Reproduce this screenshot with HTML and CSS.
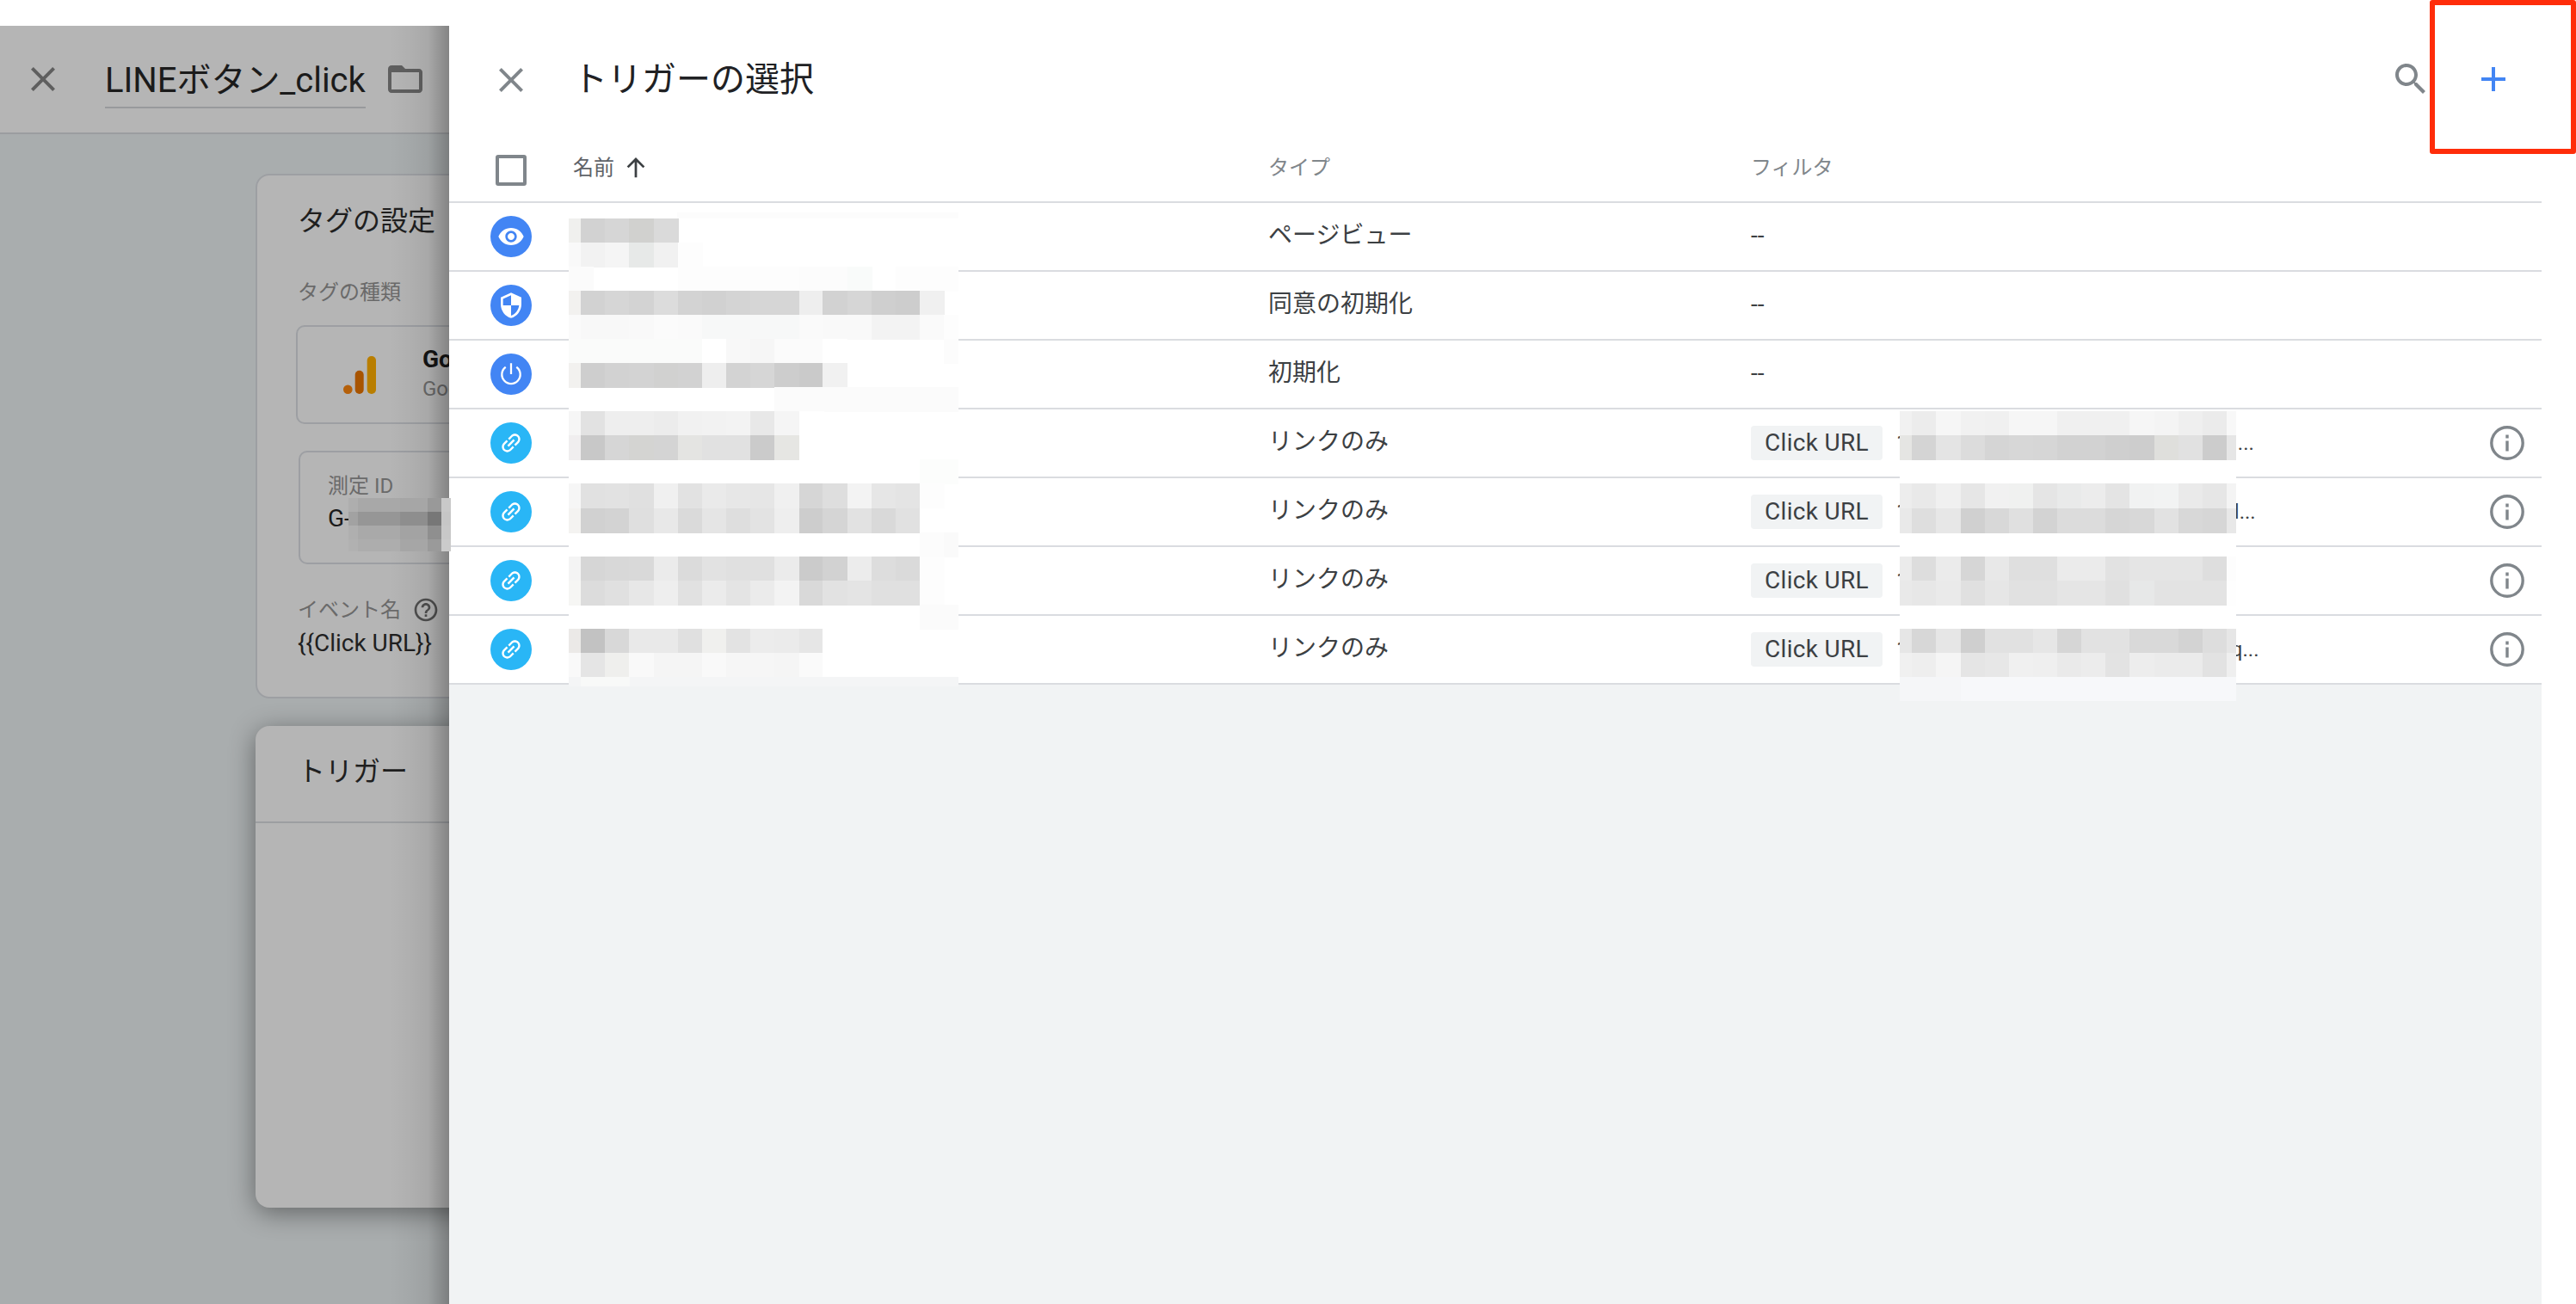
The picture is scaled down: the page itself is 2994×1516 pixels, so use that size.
FILE: index.html
```html
<!DOCTYPE html>
<html lang="ja">
<head>
<meta charset="utf-8">
<title>トリガーの選択</title>
<link rel="stylesheet" href="styles.css">
</head>
<body>
<div class="app">
  <section class="behind">
    <header class="tag-head">
      <svg class="ico48 ico-dark" viewBox="0 0 24 24"><path d="M19 6.41L17.59 5 12 10.59 6.41 5 5 6.41 10.59 12 5 17.59 6.41 19 12 13.41 17.59 19 19 17.59 13.41 12z"/></svg>
      <h1 class="tag-name">LINEボタン_click</h1>
      <svg class="ico48 ico-dark" viewBox="0 0 24 24"><path d="M20 6h-8l-2-2H4c-1.1 0-1.99.9-1.99 2L2 18c0 1.1.9 2 2 2h16c1.1 0 2-.9 2-2V8c0-1.1-.9-2-2-2zm0 12H4V8h16v10z"/></svg>
    </header>
    <div class="tag-body">
      <div class="card card-config">
        <h2 class="card-title">タグの設定</h2>
        <div class="label label-type">タグの種類</div>
        <div class="type-box">
          <svg class="ga" viewBox="0 0 38 44"><circle cx="5.3" cy="38.7" r="5.3" fill="#b5600a"/><rect x="13.7" y="16.7" width="10" height="27.3" rx="5" fill="#a85400"/><rect x="27.7" width="10.3" height="44" rx="5" fill="#b97e00"/></svg>
          <div class="type-text"><div class="type-main">Google アナリティクス</div><div class="type-sub">Google マーケティング</div></div>
        </div>
        <div class="id-box">
          <div class="label">測定 ID</div>
          <div class="id-value">G-</div>
        </div>
        <div class="label label-event">イベント名
          <svg class="help" viewBox="0 0 24 24"><path d="M11 18h2v-2h-2v2zm1-16C6.48 2 2 6.48 2 12s4.48 10 10 10 10-4.48 10-10S17.52 2 12 2zm0 18c-4.41 0-8-3.59-8-8s3.59-8 8-8 8 3.59 8 8-3.59 8-8 8zm0-14c-2.21 0-4 1.79-4 4h2c0-1.1.9-2 2-2s2 .9 2 2c0 2-3 1.75-3 5h2c0-2.25 3-2.5 3-5 0-2.21-1.79-4-4-4z"/></svg>
        </div>
        <div class="event-value">{{Click URL}}</div>
      </div>
      <div class="card card-trigger">
        <h2 class="card-title trigger-title">トリガー</h2>
      </div>
    </div>
  </section>

  <section class="panel">
    <header class="panel-head">
      <svg class="ico48 ico-gray" viewBox="0 0 24 24"><path d="M19 6.41L17.59 5 12 10.59 6.41 5 5 6.41 10.59 12 5 17.59 6.41 19 12 13.41 17.59 19 19 17.59 13.41 12z"/></svg>
      <h1 class="panel-title">トリガーの選択</h1>
      <div class="panel-actions">
        <svg class="ico48 ico-gray" viewBox="0 0 24 24"><path d="M15.5 14h-.79l-.28-.27C15.41 12.59 16 11.11 16 9.5 16 5.91 13.09 3 9.5 3S3 5.91 3 9.5 5.91 16 9.5 16c1.61 0 3.09-.59 4.23-1.57l.27.28v.79l5 4.99L20.49 19l-4.99-5zm-6 0C7.01 14 5 11.99 5 9.5S7.01 5 9.5 5 14 7.01 14 9.5 11.99 14 9.5 14z"/></svg>
        <svg class="ico48 ico-blue" viewBox="0 0 24 24"><path d="M19 13h-6v6h-2v-6H5v-2h6V5h2v6h6v2z"/></svg>
      </div>
    </header>
    <div class="list">
      <div class="row row-head">
        <div class="cell-center"><span class="checkbox"></span></div>
        <div class="th th-name">名前
          <svg class="sort" viewBox="0 0 24 24"><path d="M12 21V4M4.5 11.5L12 4l7.500 7.500"/></svg>
        </div>
        <div class="th">タイプ</div>
        <div class="th">フィルタ</div>
        <div></div>
      </div>

      <div class="row">
        <div class="cell-center"><span class="badge badge-blue"><svg class="white32" viewBox="0 0 24 24"><path d="M12 4.500C7 4.500 2.730 7.610 1 12c1.730 4.390 6 7.500 11 7.500s9.270-3.110 11-7.500c-1.730-4.390-6-7.500-11-7.500zM12 17c-2.760 0-5-2.240-5-5s2.240-5 5-5 5 2.240 5 5-2.240 5-5 5zm0-8c-1.660 0-3 1.340-3 3s1.340 3 3 3 3-1.340 3-3-1.340-3-3-3z"/></svg></span></div>
        <div></div><div class="td">ページビュー</div><div class="td">--</div><div></div>
      </div>
      <div class="row">
        <div class="cell-center"><span class="badge badge-blue"><svg class="white32" viewBox="0 0 24 24"><path d="M12 1L3 5v6c0 5.550 3.840 10.740 9 12 5.160-1.260 9-6.450 9-12V5l-9-4zm0 10.990h7c-.53 4.120-3.280 7.790-7 8.940V12H5V6.300l7-3.110v8.800z"/></svg></span></div>
        <div></div><div class="td">同意の初期化</div><div class="td">--</div><div></div>
      </div>
      <div class="row">
        <div class="cell-center"><span class="badge badge-blue"><svg class="power" viewBox="0 0 24 24"><path d="M12 2.500v9.500M7.300 5.800a8 8 0 1 0 9.400 0"/></svg></span></div>
        <div></div><div class="td">初期化</div><div class="td">--</div><div></div>
      </div>
      <div class="row">
        <div class="cell-center"><span class="badge badge-sky"><svg class="white32 link" viewBox="0 0 24 24"><path d="M3.900 12c0-1.710 1.390-3.100 3.100-3.100h4V7H7c-2.760 0-5 2.240-5 5s2.240 5 5 5h4v-1.900H7c-1.710 0-3.100-1.390-3.100-3.100zM8 13h8v-2H8v2zm9-6h-4v1.900h4c1.710 0 3.100 1.390 3.100 3.100s-1.390 3.100-3.100 3.100h-4V17h4c2.760 0 5-2.240 5-5s-2.240-5-5-5z"/></svg></span></div>
        <div></div><div class="td">リンクのみ</div>
        <div class="filter"><span class="chip">Click URL</span><span class="val">1</span><span class="tail tail-a">...</span></div>
        <div class="cell-center"><svg class="info" viewBox="0 0 40 40"><circle cx="20" cy="20" r="18.200"/><path d="M20 17.500v12M20 10.500v4"/></svg></div>
      </div>
      <div class="row">
        <div class="cell-center"><span class="badge badge-sky"><svg class="white32 link" viewBox="0 0 24 24"><path d="M3.900 12c0-1.710 1.390-3.100 3.100-3.100h4V7H7c-2.760 0-5 2.240-5 5s2.240 5 5 5h4v-1.900H7c-1.710 0-3.100-1.390-3.100-3.100zM8 13h8v-2H8v2zm9-6h-4v1.900h4c1.710 0 3.100 1.390 3.100 3.100s-1.390 3.100-3.100 3.100h-4V17h4c2.760 0 5-2.240 5-5s-2.240-5-5-5z"/></svg></span></div>
        <div></div><div class="td">リンクのみ</div>
        <div class="filter"><span class="chip">Click URL</span><span class="val">1</span><span class="tail tail-b">l...</span></div>
        <div class="cell-center"><svg class="info" viewBox="0 0 40 40"><circle cx="20" cy="20" r="18.200"/><path d="M20 17.500v12M20 10.500v4"/></svg></div>
      </div>
      <div class="row">
        <div class="cell-center"><span class="badge badge-sky"><svg class="white32 link" viewBox="0 0 24 24"><path d="M3.900 12c0-1.710 1.390-3.100 3.100-3.100h4V7H7c-2.760 0-5 2.240-5 5s2.240 5 5 5h4v-1.900H7c-1.710 0-3.100-1.390-3.100-3.100zM8 13h8v-2H8v2zm9-6h-4v1.900h4c1.710 0 3.100 1.390 3.100 3.100s-1.390 3.100-3.100 3.100h-4V17h4c2.760 0 5-2.240 5-5s-2.240-5-5-5z"/></svg></span></div>
        <div></div><div class="td">リンクのみ</div>
        <div class="filter"><span class="chip">Click URL</span><span class="val">1</span></div>
        <div class="cell-center"><svg class="info" viewBox="0 0 40 40"><circle cx="20" cy="20" r="18.200"/><path d="M20 17.500v12M20 10.500v4"/></svg></div>
      </div>
      <div class="row">
        <div class="cell-center"><span class="badge badge-sky"><svg class="white32 link" viewBox="0 0 24 24"><path d="M3.900 12c0-1.710 1.390-3.100 3.100-3.100h4V7H7c-2.760 0-5 2.240-5 5s2.240 5 5 5h4v-1.900H7c-1.710 0-3.100-1.390-3.100-3.100zM8 13h8v-2H8v2zm9-6h-4v1.900h4c1.710 0 3.100 1.390 3.100 3.100s-1.390 3.100-3.100 3.100h-4V17h4c2.760 0 5-2.240 5-5s-2.240-5-5-5z"/></svg></span></div>
        <div></div><div class="td">リンクのみ</div>
        <div class="filter"><span class="chip">Click URL</span><span class="val">1</span><span class="tail tail-c">q...</span></div>
        <div class="cell-center"><svg class="info" viewBox="0 0 40 40"><circle cx="20" cy="20" r="18.200"/><path d="M20 17.500v12M20 10.500v4"/></svg></div>
      </div>
    </div>
  </section>

  <svg class="mosaic m-names" viewBox="661 247 453 551">
    <rect class="strip" x="787" y="247" fill="#fcfcfc"/>
    <g transform="translate(0 254)"><rect x="661" fill="#f0f0ee"/><rect x="675" fill="#d2d2d2"/><rect x="703" fill="#d6d6d6"/><rect x="731" fill="#d1d1cf"/><rect x="760" fill="#dadada"/></g>
    <g transform="translate(0 282)"><rect x="661" fill="#f9f9f9"/><rect x="675" fill="#f2f2f2"/><rect x="703" fill="#f5f5f5"/><rect x="731" fill="#e7e9e8"/><rect x="760" fill="#f1f1f1"/><rect x="788" fill="#fdfdfd"/></g>
    <g transform="translate(0 310)"><rect x="661" fill="#fbfbfb"/><rect x="788" fill="#fdfdfd"/><rect x="816" fill="#fdfdfd"/><rect x="844" fill="#fdfdfd"/><rect x="872" fill="#fdfdfd"/><rect x="900" fill="#fdfdfd"/><rect x="929" fill="#fcfcfc"/><rect x="956" fill="#fcfcfc"/><rect x="985" fill="#f9fbfa"/><rect x="1041" fill="#fdfdfd"/><rect x="1069" fill="#fdfdfd"/><rect x="1097" fill="#fdfdfd"/></g>
    <g transform="translate(0 338)"><rect x="661" fill="#f2f1ef"/><rect x="675" fill="#d2d2d2"/><rect x="703" fill="#d6d6d6"/><rect x="731" fill="#d3d3d3"/><rect x="760" fill="#dcdcdc"/><rect x="788" fill="#d3d3d3"/><rect x="816" fill="#d1d1d1"/><rect x="844" fill="#d4d4d4"/><rect x="872" fill="#d6d6d6"/><rect x="900" fill="#d6d6d6"/><rect x="929" fill="#eeeeee"/><rect x="956" fill="#d2d2d2"/><rect x="985" fill="#d6d6d6"/><rect x="1013" fill="#cfcfcf"/><rect x="1041" fill="#cdcdcd"/><rect x="1069" fill="#f0f0f0"/></g>
    <g transform="translate(0 366)"><rect x="661" fill="#fafafa"/><rect x="675" fill="#f8f8f8"/><rect x="703" fill="#f8f8f8"/><rect x="731" fill="#f9f9f9"/><rect x="760" fill="#fbfbfb"/><rect x="788" fill="#fafafa"/><rect x="816" fill="#f7f8f8"/><rect x="844" fill="#f7f8f8"/><rect x="872" fill="#f7f8f8"/><rect x="900" fill="#f7f8f8"/><rect x="929" fill="#fafafa"/><rect x="956" fill="#f9f9f9"/><rect x="985" fill="#f9f9f9"/><rect x="1013" fill="#f3f3f3"/><rect x="1041" fill="#f3f3f3"/><rect x="1069" fill="#fafafa"/><rect x="1097" fill="#fdfdfd"/></g>
    <g transform="translate(0 394)"><rect x="661" fill="#fafbfa"/><rect x="675" fill="#fafbfa"/><rect x="703" fill="#fafbfa"/><rect x="731" fill="#fafbfa"/><rect x="760" fill="#fafbfa"/><rect x="788" fill="#fafbfa"/><rect x="816" fill="#ffffff"/><rect x="844" fill="#f8f8f8"/><rect x="872" fill="#f6f6f6"/><rect x="900" fill="#fbfbfb"/><rect x="929" fill="#fbfbfb"/><rect x="956" fill="#ffffff"/><rect x="1097" fill="#fcfcfc"/></g>
    <g transform="translate(0 422)"><rect x="661" fill="#f2f1ef"/><rect x="675" fill="#cecece"/><rect x="703" fill="#d2d2d2"/><rect x="731" fill="#d3d3d3"/><rect x="760" fill="#d1d1d0"/><rect x="788" fill="#d2d2d2"/><rect x="816" fill="#eeeeee"/><rect x="844" fill="#d3d3d3"/><rect x="872" fill="#d6d6d6"/><rect x="900" fill="#cdcdcd"/><rect x="929" fill="#cacaca"/><rect x="956" fill="#f1f1f1"/><rect x="985" fill="#ffffff"/></g>
    <g transform="translate(0 450)"><rect x="900" fill="#fbfbfb"/><rect x="929" fill="#fbfbfb"/><rect x="956" fill="#fbfbfb"/><rect x="985" fill="#fbfbfb"/><rect x="1013" fill="#fbfbfb"/><rect x="1041" fill="#fbfbfb"/><rect x="1069" fill="#fbfbfb"/><rect x="1097" fill="#fbfbfb"/></g>
    <g transform="translate(0 478)"><rect x="661" fill="#f6f6f6"/><rect x="675" fill="#e2e2e2"/><rect x="703" fill="#eeeeee"/><rect x="731" fill="#eeeeee"/><rect x="760" fill="#ececec"/><rect x="788" fill="#f1f1f1"/><rect x="816" fill="#f2f2f2"/><rect x="844" fill="#f3f3f3"/><rect x="872" fill="#e8e8e8"/><rect x="900" fill="#f5f5f5"/><rect x="929" fill="#ffffff"/></g>
    <g transform="translate(0 506)"><rect x="661" fill="#f0eeef"/><rect x="675" fill="#c8c8c8"/><rect x="703" fill="#d6d6d6"/><rect x="731" fill="#d4d4d2"/><rect x="760" fill="#d4d4d4"/><rect x="788" fill="#e4e4e2"/><rect x="816" fill="#e1e1e1"/><rect x="844" fill="#e1e1e1"/><rect x="872" fill="#cbcbcb"/><rect x="900" fill="#e6e6e3"/><rect x="929" fill="#ffffff"/></g>
    <g transform="translate(0 534)"><rect x="1069" fill="#fcfdfc"/><rect x="1097" fill="#fcfdfc"/></g>
    <g transform="translate(0 562)"><rect x="661" fill="#f6f6f6"/><rect x="675" fill="#e1e1e1"/><rect x="703" fill="#e2e2e2"/><rect x="731" fill="#e0e0e0"/><rect x="760" fill="#f0f0f0"/><rect x="788" fill="#e2e2e2"/><rect x="816" fill="#eaeaea"/><rect x="844" fill="#e7e7e7"/><rect x="872" fill="#e6e6e6"/><rect x="900" fill="#f0f0f0"/><rect x="929" fill="#d6d6d6"/><rect x="956" fill="#dedede"/><rect x="985" fill="#f3f3f3"/><rect x="1013" fill="#e6e6e6"/><rect x="1041" fill="#e4e4e4"/><rect x="1069" fill="#fdfdfd"/></g>
    <g transform="translate(0 591)"><rect x="661" fill="#f4f3f1"/><rect x="675" fill="#d1d1d1"/><rect x="703" fill="#d3d3d3"/><rect x="731" fill="#dfdfdf"/><rect x="760" fill="#e8e8e8"/><rect x="788" fill="#dadada"/><rect x="816" fill="#e5e5e5"/><rect x="844" fill="#dedede"/><rect x="872" fill="#e3e3e3"/><rect x="900" fill="#eeeeee"/><rect x="929" fill="#cdcdcd"/><rect x="956" fill="#d5d5d5"/><rect x="985" fill="#e2e2e2"/><rect x="1013" fill="#d9d9d9"/><rect x="1041" fill="#e1e1e1"/><rect x="1069" fill="#ffffff"/></g>
    <g transform="translate(0 619)"><rect x="1069" fill="#fcfcfc"/><rect x="1097" fill="#fafafa"/></g>
    <g transform="translate(0 647)"><rect x="661" fill="#f4f4f4"/><rect x="675" fill="#d6d6d6"/><rect x="703" fill="#d8d8d8"/><rect x="731" fill="#d9d9d9"/><rect x="760" fill="#ebebeb"/><rect x="788" fill="#dbdbdb"/><rect x="816" fill="#e2e2e2"/><rect x="844" fill="#e0e0e0"/><rect x="872" fill="#e0e0e0"/><rect x="900" fill="#ebebeb"/><rect x="929" fill="#cbcbcb"/><rect x="956" fill="#d2d2d2"/><rect x="985" fill="#ececec"/><rect x="1013" fill="#dddddd"/><rect x="1041" fill="#dadada"/><rect x="1069" fill="#fdfdfd"/></g>
    <g transform="translate(0 675)"><rect x="661" fill="#f6f6f4"/><rect x="675" fill="#dcdcdc"/><rect x="703" fill="#e0e0e0"/><rect x="731" fill="#e7e7e7"/><rect x="760" fill="#eeeeee"/><rect x="788" fill="#e1e1e1"/><rect x="816" fill="#ebebeb"/><rect x="844" fill="#e4e4e4"/><rect x="872" fill="#ebebeb"/><rect x="900" fill="#f3f3f3"/><rect x="929" fill="#d9d9d9"/><rect x="956" fill="#e2e2e2"/><rect x="985" fill="#e4e4e4"/><rect x="1013" fill="#e0e0e0"/><rect x="1041" fill="#e0e0e0"/><rect x="1069" fill="#fdfdfd"/></g>
    <g transform="translate(0 703)"><rect x="1069" fill="#fbfbfb"/><rect x="1097" fill="#fbfbfb"/></g>
    <g transform="translate(0 731)"><rect x="661" fill="#ebe9e7"/><rect x="675" fill="#c2c2c2"/><rect x="703" fill="#d8d8d8"/><rect x="731" fill="#e9e9e9"/><rect x="760" fill="#e9e9e9"/><rect x="788" fill="#e0e0e0"/><rect x="816" fill="#f0f0ee"/><rect x="844" fill="#e3e3e3"/><rect x="872" fill="#ececec"/><rect x="900" fill="#ebebeb"/><rect x="929" fill="#e6e6e6"/><rect x="956" fill="#ffffff"/></g>
    <g transform="translate(0 759)"><rect x="661" fill="#f9f9f9"/><rect x="675" fill="#e5e5e5"/><rect x="703" fill="#efefed"/><rect x="731" fill="#f9f9f9"/><rect x="760" fill="#f5f5f5"/><rect x="788" fill="#f5f5f5"/><rect x="816" fill="#f9f9f9"/><rect x="844" fill="#f6f6f6"/><rect x="872" fill="#f6f6f6"/><rect x="900" fill="#f5f5f5"/><rect x="929" fill="#fafafa"/><rect x="956" fill="#ffffff"/></g>
    <rect class="band" x="661" y="787" fill="#f4f5f6"/>
    <g transform="translate(0 787)"><rect x="675" fill="#f8f9f8"/><rect x="703" fill="#f8f9f8"/></g>
  </svg>

  <svg class="mosaic m-filter" viewBox="2208 478 391 337">
    <g transform="translate(0 478)"><rect x="2208" fill="#f1f1f1"/><rect x="2222" fill="#ececec"/><rect x="2250" fill="#f6f6f6"/><rect x="2279" fill="#f1f1f1"/><rect x="2307" fill="#f0f0f0"/><rect x="2335" fill="#f6f6f6"/><rect x="2363" fill="#f6f6f6"/><rect x="2391" fill="#f0f0f0"/><rect x="2419" fill="#f0f0f0"/><rect x="2447" fill="#f0f0f0"/><rect x="2475" fill="#f6f6f6"/><rect x="2504" fill="#f4f4f4"/><rect x="2532" fill="#efefef"/><rect x="2560" fill="#ebebeb"/><rect x="2588" fill="#f8f8f8"/></g>
    <g transform="translate(0 506)"><rect x="2208" fill="#e5e5e3"/><rect x="2222" fill="#d4d4d4"/><rect x="2250" fill="#e4e4e4"/><rect x="2279" fill="#dcdcdc"/><rect x="2307" fill="#d5d5d5"/><rect x="2335" fill="#d7d7d7"/><rect x="2363" fill="#d6d6d6"/><rect x="2391" fill="#d2d2d2"/><rect x="2419" fill="#d2d2d2"/><rect x="2447" fill="#cfcfcf"/><rect x="2475" fill="#cdcdcd"/><rect x="2504" fill="#dfdfdc"/><rect x="2532" fill="#e1e1e1"/><rect x="2560" fill="#cccccc"/><rect x="2588" fill="#e6e6e6"/></g>
    <g transform="translate(0 562)"><rect x="2208" fill="#ededed"/><rect x="2222" fill="#e9e9e9"/><rect x="2250" fill="#f0f0f0"/><rect x="2279" fill="#e6e6e6"/><rect x="2307" fill="#f1f1f1"/><rect x="2335" fill="#f0f1f0"/><rect x="2363" fill="#e5e5e5"/><rect x="2391" fill="#e9eaea"/><rect x="2419" fill="#ececec"/><rect x="2447" fill="#e4e4e4"/><rect x="2475" fill="#f1f2f2"/><rect x="2504" fill="#f2f3f3"/><rect x="2532" fill="#eaeaea"/><rect x="2560" fill="#e6e6e6"/><rect x="2588" fill="#f4f4f4"/></g>
    <g transform="translate(0 591)"><rect x="2208" fill="#e9e9e9"/><rect x="2222" fill="#dedede"/><rect x="2250" fill="#e7e7e7"/><rect x="2279" fill="#d0d0d0"/><rect x="2307" fill="#d8d8d8"/><rect x="2335" fill="#e0e0e0"/><rect x="2363" fill="#d3d3d3"/><rect x="2391" fill="#dcdcdc"/><rect x="2419" fill="#dcdcdc"/><rect x="2447" fill="#d6d6d6"/><rect x="2475" fill="#d8d8d8"/><rect x="2504" fill="#e2e2e2"/><rect x="2532" fill="#d8d8d8"/><rect x="2560" fill="#d6d6d6"/><rect x="2588" fill="#e8e8e8"/></g>
    <g transform="translate(0 647)"><rect x="2208" fill="#ebebeb"/><rect x="2222" fill="#dddddd"/><rect x="2250" fill="#ebebeb"/><rect x="2279" fill="#d6d6d6"/><rect x="2307" fill="#e8e8e8"/><rect x="2335" fill="#dfdfdf"/><rect x="2363" fill="#dfdfdf"/><rect x="2391" fill="#ebebeb"/><rect x="2419" fill="#ebebeb"/><rect x="2447" fill="#e2e2e2"/><rect x="2475" fill="#e5e5e5"/><rect x="2504" fill="#e5e5e5"/><rect x="2532" fill="#e5e5e5"/><rect x="2560" fill="#dedede"/><rect x="2588" fill="#fdfdfd"/></g>
    <g transform="translate(0 675)"><rect x="2208" fill="#e9e9e9"/><rect x="2222" fill="#e7e7e7"/><rect x="2250" fill="#eaeaea"/><rect x="2279" fill="#e0e0e0"/><rect x="2307" fill="#e6e6e6"/><rect x="2335" fill="#e1e1e1"/><rect x="2363" fill="#e1e1e1"/><rect x="2391" fill="#e5e5e5"/><rect x="2419" fill="#e5e5e5"/><rect x="2447" fill="#e0e0e0"/><rect x="2475" fill="#e7e8e8"/><rect x="2504" fill="#e3e3e3"/><rect x="2532" fill="#e3e3e3"/><rect x="2560" fill="#e3e3e3"/><rect x="2588" fill="#fefefe"/></g>
    <g transform="translate(0 731)"><rect x="2208" fill="#e6e6e6"/><rect x="2222" fill="#d7d7d7"/><rect x="2250" fill="#e6e6e6"/><rect x="2279" fill="#cfcfcf"/><rect x="2307" fill="#e1e1e1"/><rect x="2335" fill="#e1e1e1"/><rect x="2363" fill="#e6e6e6"/><rect x="2391" fill="#d6d6d6"/><rect x="2419" fill="#e2e2e2"/><rect x="2447" fill="#e2e2e2"/><rect x="2475" fill="#d9d9d9"/><rect x="2504" fill="#d9d9d9"/><rect x="2532" fill="#d3d3d3"/><rect x="2560" fill="#dddddd"/><rect x="2588" fill="#e6e6e6"/></g>
    <g transform="translate(0 759)"><rect x="2208" fill="#f0f0f0"/><rect x="2222" fill="#eeeeee"/><rect x="2250" fill="#f5f5f5"/><rect x="2279" fill="#e5e5e5"/><rect x="2307" fill="#e7e7e7"/><rect x="2335" fill="#f0f0f0"/><rect x="2363" fill="#efefef"/><rect x="2391" fill="#eaeaea"/><rect x="2419" fill="#ececec"/><rect x="2447" fill="#e3e3e3"/><rect x="2475" fill="#ededed"/><rect x="2504" fill="#ebebeb"/><rect x="2532" fill="#ebebeb"/><rect x="2560" fill="#e2e2e2"/><rect x="2588" fill="#efefef"/></g>
    <rect class="band" x="2208" y="787" fill="#f7f8fa"/>
    <g transform="translate(0 787)"><rect x="2208" fill="#f5f6f8"/><rect x="2222" fill="#f5f6f8"/><rect x="2250" fill="#f5f6f8"/></g>
  </svg>

  <svg class="mosaic m-id" viewBox="405 579 119 62">
    <g transform="translate(0 579)"><rect class="c1" x="405" fill="#aeaeae"/><rect class="c2" x="416" fill="#a8a8a8"/><rect class="c2" x="465" fill="#a6a6a6"/><rect class="c2" x="497" fill="#999999"/><rect class="c2" x="513" fill="#c9c9c9"/></g>
    <g transform="translate(0 595)"><rect class="c1" x="405" fill="#a2a2a2"/><rect class="c2" x="416" fill="#969696"/><rect class="c2" x="465" fill="#8e8e8e"/><rect class="c2" x="497" fill="#777777"/><rect class="c2" x="513" fill="#c6c6c6"/></g>
    <g transform="translate(0 611)"><rect class="c1" x="405" fill="#afafaf"/><rect class="c2" x="416" fill="#a9a9a9"/><rect class="c2" x="465" fill="#a3a3a3"/><rect class="c2" x="497" fill="#8f8f8f"/><rect class="c2" x="513" fill="#c8c8c8"/></g>
    <g transform="translate(0 627)"><rect class="c1" x="405" fill="#b1b1b1"/><rect class="c2" x="416" fill="#adadad"/><rect class="c2" x="465" fill="#a6a6a6"/><rect class="c2" x="497" fill="#9a9a9a"/><rect class="c2" x="513" fill="#cbcbcb"/></g>
  </svg>

  <div class="callout"></div>
</div>
</body>
</html>
```

FILE: styles.css
```css
* { box-sizing: border-box; }
html, body { margin: 0; padding: 0; background: #fff; }
body { font-family: Roboto, "Noto Sans CJK JP", sans-serif; color: #202124; }
h1, h2 { margin: 0; font-weight: 400; }

.app { position: relative; display: flex; width: 2994px; height: 1516px; overflow: hidden; background: #fff; }

/* dimmed page behind the panel */
.behind { position: relative; width: 522px; margin-top: 30px; background: #a9adae; overflow: hidden; flex: none; }
.behind::after { content: ""; position: absolute; top: 0; right: 0; bottom: 0; width: 70px;
  background: linear-gradient(to right, rgba(0,0,0,0) 0, rgba(0,0,0,.03) 35%, rgba(0,0,0,.07) 65%, rgba(0,0,0,.27) 100%); }
.tag-head { display: flex; align-items: center; height: 126px; padding-left: 26px; background: #b5b5b5; border-bottom: 2px solid #9b9da0; }
.tag-name { margin-left: 48px; padding-top: 5px; font-size: 40px; line-height: 61px; height: 68px; border-bottom: 2px solid #98999c; color: #1b1b1b; white-space: nowrap; letter-spacing: -.05px; }
.tag-head svg:last-child { margin-left: 22px; flex: none; }

.tag-body { padding: 46px 0 0 297px; }
.card { width: 900px; background: #b5b5b5; border-radius: 16px; }
.card-config { border: 2px solid #9d9fa3; padding: 31px 0 42px 47px; }
.card-title { font-size: 32px; line-height: 44px; color: #1f1f1f; }
.label { font-size: 24px; line-height: 32px; color: #6a6a6a; }
.label-type { margin-top: 45px; }
.type-box { display: flex; align-items: center; height: 115px; margin: 22px 0 0 -2px; padding-left: 53px; border: 2px solid #9d9fa3; border-radius: 10px; }
.ga { width: 38px; height: 44px; flex: none; }
.type-text { margin-left: 54px; margin-top: -2px; }
.type-main { font-size: 28px; line-height: 34px; font-weight: 700; color: #151515; white-space: nowrap; }
.type-sub { font-size: 24px; line-height: 34px; color: #6a6a6a; white-space: nowrap; }
.id-box { height: 132px; margin: 31px 0 0 1px; padding: 23px 0 0 32px; border: 2px solid #9d9fa3; border-radius: 10px; }
.id-value { margin-top: 4px; font-size: 28px; line-height: 36px; color: #1b1b1b; }
.label-event { display: flex; align-items: center; margin-top: 37px; }
.help { width: 32px; height: 32px; margin-left: 13px; fill: #4f4f4f; flex: none; }
.event-value { margin-top: 3px; font-size: 28px; line-height: 40px; color: #1f1f1f; }
.card-trigger { height: 560px; margin-top: 32px; box-shadow: 0 6px 30px rgba(0,0,0,.42); }
.trigger-title { height: 113px; padding: 31px 0 0 49px; border-bottom: 2px solid #9c9ea1; }

/* selection panel */
.panel { flex: 1; display: flex; flex-direction: column; min-width: 0; background: #fff; }
.panel-head { display: flex; align-items: center; height: 126px; margin-top: 30px; padding: 0 72px 0 48px; flex: none; }
.panel-title { margin-left: 48px; font-size: 40px; line-height: 60px; color: #202124; }
.panel-actions { display: flex; gap: 48px; margin-left: auto; margin-top: -2px; }
.ico48 { width: 48px; height: 48px; flex: none; }
.ico-dark { fill: #5f5f5f; }
.ico-gray { fill: #80868b; }
.ico-blue { fill: #4285f4; }

.list { flex: 1; width: 2432px; background: #f1f3f4; }
.row { display: grid; grid-template-columns: 144px 808px 561px 839px 80px; align-items: center; height: 80px; background: #fff; border-bottom: 2px solid #dadce0; }
.cell-center { display: flex; justify-content: center; align-items: center; }
.checkbox { display: block; width: 36px; height: 36px; margin-top: 6px; border: 4px solid #80868b; border-radius: 3px; }
.th { font-size: 24px; line-height: 32px; color: #80868b; }
.th-name { display: flex; align-items: center; color: #5f6368; }
.sort { width: 30px; height: 30px; margin-left: 10px; fill: none; stroke: #3c4043; stroke-width: 2.200; }
.td { font-size: 28px; line-height: 36px; margin-top: -2px; color: #3c4043; }
.badge { display: flex; align-items: center; justify-content: center; width: 48px; height: 48px; border-radius: 50%; }
.badge-blue { background: #4285f4; }
.badge-sky { background: #29b6f6; }
.white32 { width: 32px; height: 32px; fill: #fff; }
.link { width: 30px; height: 30px; transform: rotate(-45deg); }
.power { width: 32px; height: 32px; fill: none; stroke: #fff; stroke-width: 1.700; }
.filter { display: flex; align-items: center; white-space: nowrap; }
.chip { height: 40px; padding: 0 16px; font-size: 28px; line-height: 40px; letter-spacing: .3px; color: #3c4043; background: #f1f3f4; border-radius: 4px; }
.val { width: 393px; margin-left: 16px; font-size: 28px; color: #3c4043; flex: none; }
.tail { font-size: 24px; color: #3c4043; }
.tail-a { margin-left: 4px; }
.tail-b { margin-left: 0; }
.tail-c { margin-left: -4px; }
.info { width: 40px; height: 40px; fill: none; stroke: #80868b; stroke-width: 3.400; }

/* pixelated privacy blocks that sit over the list */
.mosaic { position: absolute; display: block; background: #fff; shape-rendering: crispEdges; }
.mosaic rect { width: 28.5px; height: 28.5px; }
.mosaic .strip { width: 327px; height: 7px; }
.mosaic .band { width: 453px; height: 28px; }
.m-names { left: 661px; top: 247px; width: 453px; height: 551px; }
.m-filter { left: 2208px; top: 478px; width: 391px; height: 337px; }
.m-id { left: 405px; top: 579px; width: 119px; height: 62px; background: transparent; }
.m-id rect { height: 16px; }
.m-id .c1 { width: 11px; }
.m-id .c2 { width: 50px; }

/* red annotation drawn on top of the screenshot */
.callout { position: absolute; top: 0; right: 0; width: 170px; height: 179px; border: 6px solid #ff2d0a; border-radius: 3px; }
```
